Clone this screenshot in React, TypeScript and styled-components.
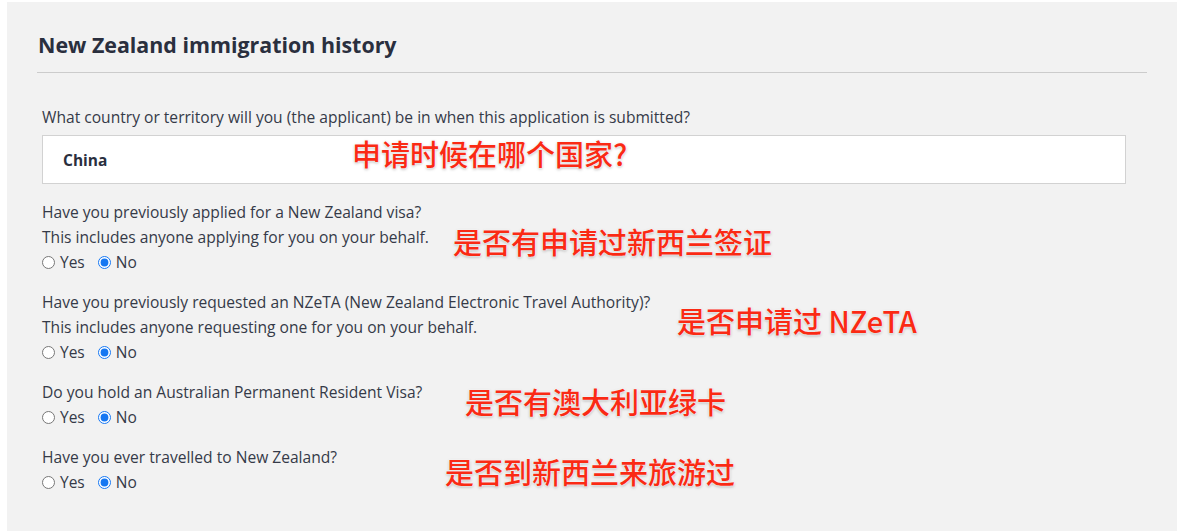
import React, {FC} from 'react';
import styled, {createGlobalStyle} from 'styled-components';

const GlobalStyle = createGlobalStyle`
  html, body {
    margin: 0;
    padding: 0;
    background: #ffffff;
  }
  body {
    font-family: "Open Sans", "Noto Sans", sans-serif;
    color: #353a48;
  }
`

const Page = styled.div`
  padding: 2px 6px 0 7px;
`

const Panel = styled.section`
  position: relative;
  background: #f2f2f2;
  min-height: 529px;
  padding: 0 30px 0 30px;
  box-sizing: border-box;
`

const Heading = styled.h2`
  margin: 0;
  padding: 30px 0 15px 1px;
  font-size: 21.4px;
  line-height: 25px;
  font-weight: 700;
  color: #2a2f3e;
  border-bottom: 1px solid #cccccc;
`

const Form = styled.div`
  padding: 32px 21px 0 5px;
`

const Field = styled.div`
  margin-bottom: 16px;
`

const Line = styled.div`
  font-size: 15.6px;
  line-height: 25px;
  color: #353a48;
`

const Label = styled(Line)`
  margin-bottom: 5px;
`

const InputBox = styled.div`
  height: 47px;
  display: flex;
  align-items: center;
  padding: 0 20px;
  background: #ffffff;
  border: 1px solid #d2d2d2;
  font-size: 15.5px;
  font-weight: 700;
  color: #2a2f3e;
`

const RadioRow = styled.div`
  display: flex;
  align-items: center;
  gap: 13px;
  height: 24px;
`

const RadioLabel = styled.label`
  display: flex;
  align-items: center;
  gap: 5px;
  font-size: 15.5px;
  color: #353a48;
`

const Radio = styled.input`
  margin: 0;
  width: 13px;
  height: 13px;
  accent-color: #1677f2;
`

const Note = styled.span<{x: number; y: number}>`
  position: absolute;
  left: ${p => p.x}px;
  top: ${p => p.y}px;
  font-family: "Noto Sans CJK SC", "Noto Sans", sans-serif;
  font-size: 29px;
  line-height: 36px;
  font-weight: 500;
  color: #fa2a14;
  white-space: nowrap;
  text-shadow: 0 0 2px #ffffff, 0 0 2px #ffffff, 0 1px 3px rgba(0,0,0,0.35);
`

type Question = {
    name: string
    lines: string[]
}

const questions: Question[] = [
    {name: 'visa', lines: ['Have you previously applied for a New Zealand visa?', 'This includes anyone applying for you on your behalf.']},
    {name: 'nzeta', lines: ['Have you previously requested an NZeTA (New Zealand Electronic Travel Authority)?', 'This includes anyone requesting one for you on your behalf.']},
    {name: 'aus', lines: ['Do you hold an Australian Permanent Resident Visa?']},
    {name: 'travel', lines: ['Have you ever travelled to New Zealand?']},
]

// page coordinates of the red notes laid over the form
const notes = [
    {text: '申请时候在哪个国家?', x: 352, y: 135},
    {text: '是否有申请过新西兰签证', x: 453, y: 223},
    {text: '是否申请过 NZeTA', x: 677, y: 302},
    {text: '是否有澳大利亚绿卡', x: 465, y: 383},
    {text: '是否到新西兰来旅游过', x: 445, y: 453},
]

const App: FC = () => {
    return (
        <Page>
            <GlobalStyle/>
            <Panel>
                <Heading>New Zealand immigration history</Heading>
                <Form>
                    <Field>
                        <Label>What country or territory will you (the applicant) be in when this application is submitted?</Label>
                        <InputBox>China</InputBox>
                    </Field>
                    {questions.map(q => (
                        <Field key={q.name}>
                            {q.lines.map(l => <Line key={l}>{l}</Line>)}
                            <RadioRow>
                                <RadioLabel><Radio type="radio" name={q.name}/>Yes</RadioLabel>
                                <RadioLabel><Radio type="radio" name={q.name} defaultChecked/>No</RadioLabel>
                            </RadioRow>
                        </Field>
                    ))}
                </Form>
                {notes.map(n => <Note key={n.text} x={n.x - 7} y={n.y - 2}>{n.text}</Note>)}
            </Panel>
        </Page>
    );
}

export default App
